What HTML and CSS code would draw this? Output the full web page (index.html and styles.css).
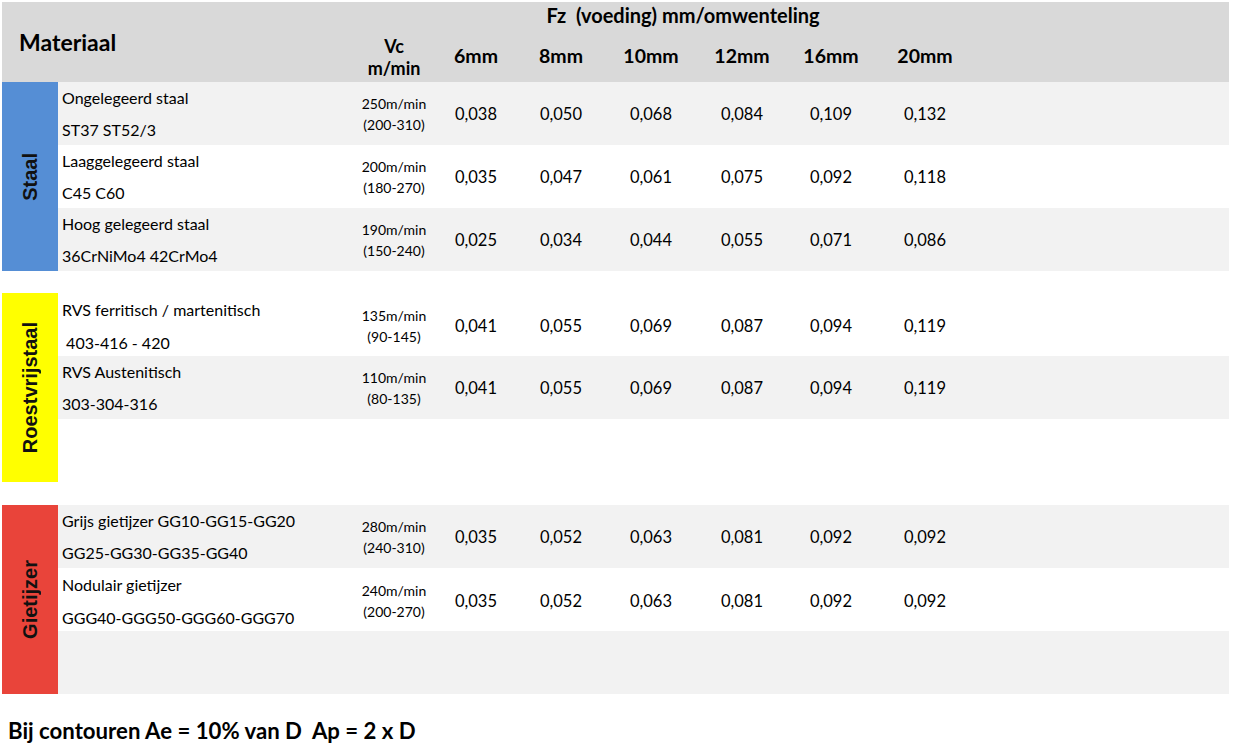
FILE: index.html
```html
<!DOCTYPE html>
<html lang="nl">
<head>
<meta charset="utf-8">
<title>Snijgegevens</title>
<link rel="stylesheet" href="styles.css">
</head>
<body>
<div class="sheet">
  <div class="head">
    <div class="h-mat">Materiaal</div>
    <div class="h-vc"><span>Vc</span><span>m/min</span></div>
    <div class="h-fz">Fz&nbsp; (voeding) mm/omwenteling</div>
    <div class="h-d">6mm</div>
    <div class="h-d">8mm</div>
    <div class="h-d">10mm</div>
    <div class="h-d">12mm</div>
    <div class="h-d">16mm</div>
    <div class="h-d">20mm</div>
  </div>

  <div class="group">
    <div class="bar bar-blue"><span>Staal</span></div>
    <div class="rows">
      <div class="row alt">
        <div class="mat"><span>Ongelegeerd staal</span><span>ST37 ST52/3</span></div>
        <div class="vc"><span>250m/min</span><span>(200-310)</span></div>
        <div class="v">0,038</div><div class="v">0,050</div><div class="v">0,068</div><div class="v">0,084</div><div class="v">0,109</div><div class="v">0,132</div>
      </div>
      <div class="row">
        <div class="mat"><span>Laaggelegeerd staal</span><span>C45 C60</span></div>
        <div class="vc"><span>200m/min</span><span>(180-270)</span></div>
        <div class="v">0,035</div><div class="v">0,047</div><div class="v">0,061</div><div class="v">0,075</div><div class="v">0,092</div><div class="v">0,118</div>
      </div>
      <div class="row alt">
        <div class="mat"><span>Hoog gelegeerd staal</span><span>36CrNiMo4 42CrMo4</span></div>
        <div class="vc"><span>190m/min</span><span>(150-240)</span></div>
        <div class="v">0,025</div><div class="v">0,034</div><div class="v">0,044</div><div class="v">0,055</div><div class="v">0,071</div><div class="v">0,086</div>
      </div>
    </div>
  </div>

  <div class="group g2">
    <div class="bar bar-yellow"><span>Roestvrijstaal</span></div>
    <div class="rows">
      <div class="row">
        <div class="mat wide"><span>RVS ferritisch / martenitisch</span><span>&nbsp;403-416 - 420</span></div>
        <div class="vc"><span>135m/min</span><span>(90-145)</span></div>
        <div class="v">0,041</div><div class="v">0,055</div><div class="v">0,069</div><div class="v">0,087</div><div class="v">0,094</div><div class="v">0,119</div>
      </div>
      <div class="row alt">
        <div class="mat"><span>RVS Austenitisch</span><span>303-304-316</span></div>
        <div class="vc"><span>110m/min</span><span>(80-135)</span></div>
        <div class="v">0,041</div><div class="v">0,055</div><div class="v">0,069</div><div class="v">0,087</div><div class="v">0,094</div><div class="v">0,119</div>
      </div>
      <div class="row empty"></div>
    </div>
  </div>

  <div class="group g3">
    <div class="bar bar-red"><span>Gietijzer</span></div>
    <div class="rows">
      <div class="row alt">
        <div class="mat"><span>Grijs gietijzer GG10-GG15-GG20</span><span>GG25-GG30-GG35-GG40</span></div>
        <div class="vc"><span>280m/min</span><span>(240-310)</span></div>
        <div class="v">0,035</div><div class="v">0,052</div><div class="v">0,063</div><div class="v">0,081</div><div class="v">0,092</div><div class="v">0,092</div>
      </div>
      <div class="row">
        <div class="mat wide"><span>Nodulair gietijzer</span><span>GGG40-GGG50-GGG60-GGG70</span></div>
        <div class="vc"><span>240m/min</span><span>(200-270)</span></div>
        <div class="v">0,035</div><div class="v">0,052</div><div class="v">0,063</div><div class="v">0,081</div><div class="v">0,092</div><div class="v">0,092</div>
      </div>
      <div class="row alt empty"></div>
    </div>
  </div>

  <p class="note">Bij contouren Ae = 10% van D&nbsp; Ap = 2 x D</p>
</div>
</body>
</html>
```

FILE: styles.css
```css
* { box-sizing: border-box; }

body {
  margin: 0;
  background: #ffffff;
  color: #000000;
  font-family: Lato, "Open Sans", "Liberation Sans", sans-serif;
}

.sheet {
  padding: 2px 0 0 2px;
  width: 1229px;
}

/* header */
.head {
  display: grid;
  grid-template-columns: 356px 72px 92px 78px 102px 80px 98px 90px 1fr;
  grid-template-rows: 28px 52px;
  background: #d9d9d9;
  font-weight: 700;
}

.h-mat {
  grid-row: 1 / span 2;
  grid-column: 1;
  padding: 26px 0 0 17px;
  font-size: 23px;
  line-height: 28px;
}

.h-vc {
  grid-row: 1 / span 2;
  grid-column: 2;
  display: flex;
  flex-direction: column;
  align-items: center;
  padding-top: 33px;
  font-size: 18px;
  line-height: 22px;
}

.h-fz {
  grid-row: 1;
  grid-column: 3 / span 6;
  text-align: center;
  padding-right: 34px;
  font-size: 20px;
  line-height: 26px;
}

.h-d {
  grid-row: 2;
  text-align: center;
  font-size: 19.5px;
  line-height: 52px;
}

/* groups */
.group {
  display: flex;
}
.g2 { margin-top: 22px; }
.g3 { margin-top: 23px; }

.bar {
  width: 56px;
  flex: none;
  display: flex;
  align-items: center;
  justify-content: center;
}
.bar span {
  writing-mode: vertical-rl;
  transform: rotate(180deg);
  font-family: "Liberation Sans", Arial, sans-serif;
  font-weight: 700;
  font-size: 20px;
  color: #111111;
}
.bar-blue { background: #558ed5; }
.bar-yellow { background: #ffff00; }
.bar-red { background: #e9443a; }

.rows {
  flex: 1;
  display: flex;
  flex-direction: column;
}

.row {
  display: grid;
  grid-template-columns: 300px 72px 92px 78px 102px 80px 98px 90px 1fr;
  height: 63px;
  background: #ffffff;
}
.row.alt { background: #f2f2f2; }

.mat {
  display: flex;
  flex-direction: column;
  padding: 0 0 0 4px;
  font-size: 16px;
  line-height: 32px;
  white-space: pre;
}
.mat.wide { line-height: 33px; padding-top: 0; }

.vc {
  display: flex;
  flex-direction: column;
  align-items: center;
  justify-content: center;
  font-size: 14px;
  line-height: 21px;
}

.v {
  display: flex;
  align-items: center;
  justify-content: center;
  padding-bottom: 1px;
  font-size: 16.5px;
}

.note {
  margin: 24px 0 0 6px;
  font-weight: 700;
  font-size: 22.2px;
  line-height: 26px;
}
```
